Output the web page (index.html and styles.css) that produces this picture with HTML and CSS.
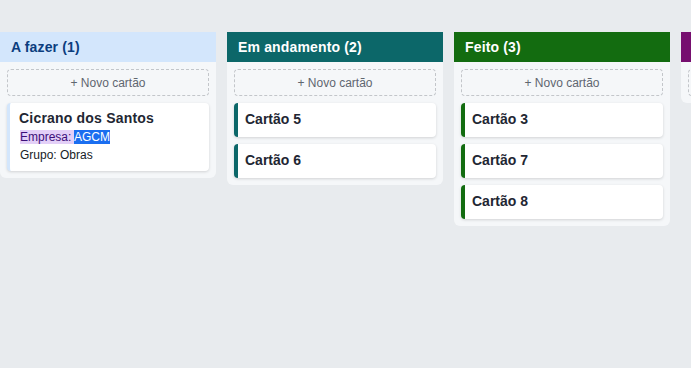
FILE: index.html
```html
<!DOCTYPE html>
<html lang="pt-BR">
<head>
    <meta charset="UTF-8">
    <title>Quadro</title>
    <link rel="stylesheet" href="styles.css">
</head>
<body>
    <div class="board">
        <div class="column todo">
            <div class="column-header">A fazer (1)</div>
            <button class="add-card">+ Novo cartão</button>
            <div class="card card-detail">
                <div class="card-title">Cicrano dos Santos</div>
                <div class="card-line"><span class="hl-label">Empresa: </span><span class="hl-sel">AGCM</span></div>
                <div class="card-line">Grupo: Obras</div>
            </div>
        </div>

        <div class="column doing">
            <div class="column-header">Em andamento (2)</div>
            <button class="add-card">+ Novo cartão</button>
            <div class="card"><div class="card-title">Cartão 5</div></div>
            <div class="card"><div class="card-title">Cartão 6</div></div>
        </div>

        <div class="column done">
            <div class="column-header">Feito (3)</div>
            <button class="add-card">+ Novo cartão</button>
            <div class="card"><div class="card-title">Cartão 3</div></div>
            <div class="card"><div class="card-title">Cartão 7</div></div>
            <div class="card"><div class="card-title">Cartão 8</div></div>
        </div>

        <!-- coluna cortada pela borda da janela -->
        <div class="column archived">
            <div class="column-header"></div>
            <button class="add-card" aria-label="Novo cartão"></button>
        </div>
    </div>
</body>
</html>
```

FILE: styles.css
```css
body {
    margin: 0;
    font-family: 'Liberation Sans', Arial, sans-serif;
    background: #e8ebee;
    overflow: hidden;
}
.board {
    display: flex;
    align-items: flex-start;
    gap: 11px;
    padding-top: 32px;
}
.column {
    flex: 0 0 216px;
    background: #f5f7f9;
    border-radius: 0 0 6px 6px;
    padding-bottom: 7px;
    display: flex;
    flex-direction: column;
    gap: 7px;
}
.column-header {
    height: 30px;
    line-height: 31px;
    padding: 0 11px;
    font-size: 14px;
    font-weight: bold;
    letter-spacing: 0.15px;
    color: white;
    white-space: nowrap;
    overflow: hidden;
}
.todo .column-header { background: #d3e6fc; color: #0b3d7e; }
.doing .column-header { background: #0c6769; }
.done .column-header { background: #136c10; }
.archived .column-header { background: #760f6f; }

.add-card {
    margin: 0 7px;
    height: 27px;
    border: 1px dashed #c3c6ca;
    border-radius: 4px;
    background: transparent;
    font-family: inherit;
    font-size: 12px;
    color: #5f6670;
    cursor: pointer;
}
.card {
    margin: 0 7px;
    background: white;
    border-radius: 4px;
    border-left: 4px solid #ccc;
    box-shadow: 0 1px 3px rgba(0, 0, 0, 0.15);
    padding: 0 10px 3px 7px;
    height: 34px;
    box-sizing: border-box;
    display: flex;
    align-items: center;
}
.doing .card { border-left-color: #0c6769; }
.done .card { border-left-color: #136c10; }
.todo .card { border-left: 3px solid #d3e6fc; padding-left: 9px; }

.card-title {
    font-size: 14px;
    font-weight: bold;
    color: #1f2733;
}
.card-detail {
    height: auto;
    display: block;
    padding-top: 7px;
    padding-bottom: 7px;
}
.card-detail .card-title {
    letter-spacing: 0.2px;
    line-height: 17px;
    margin-bottom: 1px;
}
.card-line {
    font-size: 12px;
    color: #171c26;
    line-height: 18px;
    margin-left: 1px;
}
.hl-label {
    background: #e3cff7;
    color: #3d0f7a;
}
.hl-sel {
    background: #1a6ef0;
    color: white;
}
```
